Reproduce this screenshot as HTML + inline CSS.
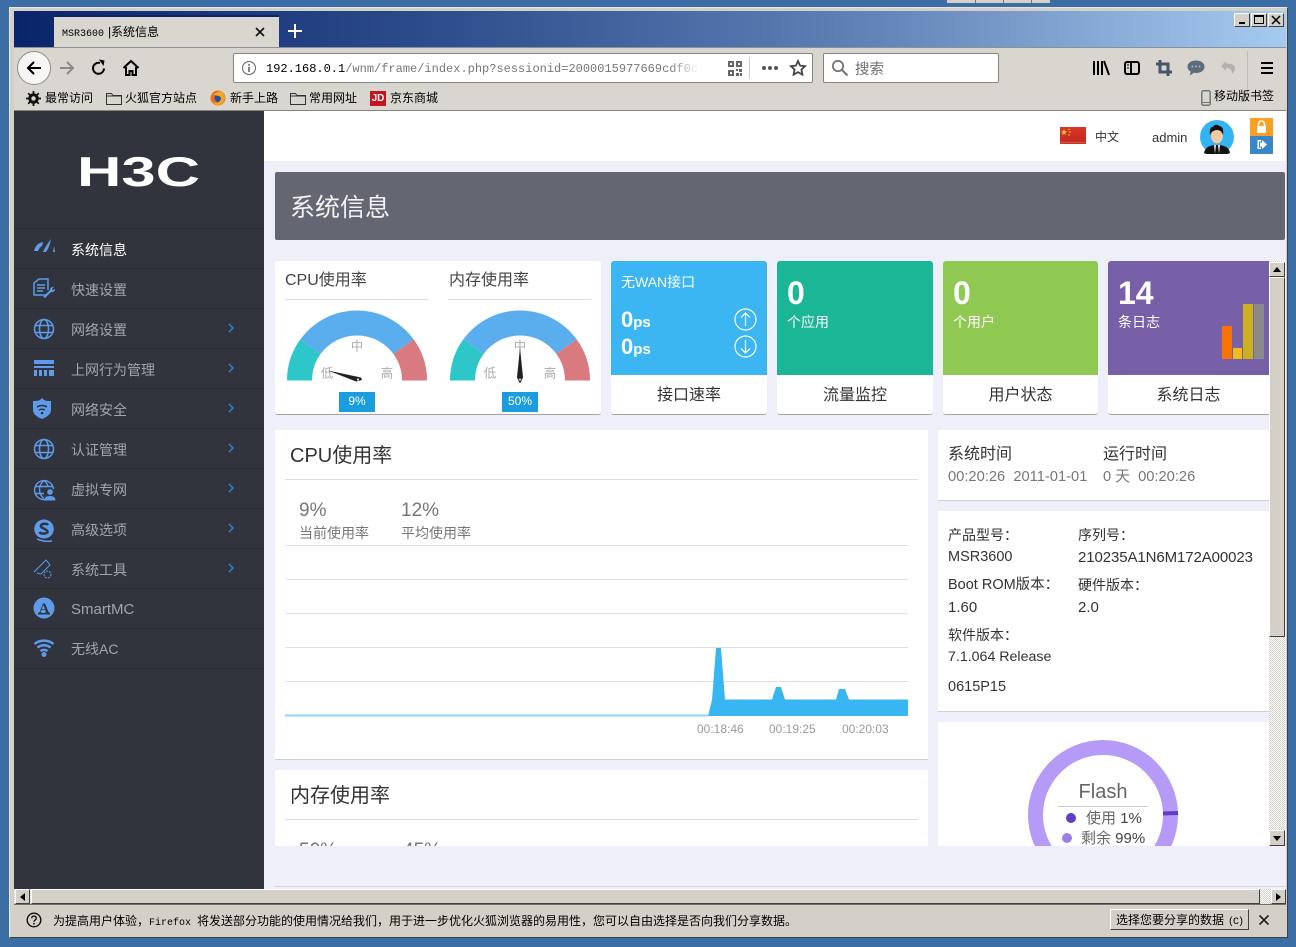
<!DOCTYPE html>
<html lang="zh"><head><meta charset="utf-8"><title>MSR3600|系统信息</title>
<style>
html,body{margin:0;padding:0;width:1296px;height:947px;overflow:hidden;background:#3a6ea5}
*{box-sizing:border-box}
body{font-family:"Liberation Sans","Noto Sans CJK SC",sans-serif;position:relative;color:#333}
.a,.t{position:absolute}
.t{white-space:nowrap;line-height:1}
.c{font-family:"Liberation Mono","WenQuanYi Zen Hei",monospace;color:#000}
.m{color:#a2a5aa;font-size:14px;left:71px}
.line{position:absolute;left:14px;width:250px;height:1px;background:#292b33}
.chev{position:absolute;left:228px;width:6px;height:10px}
.btn{position:absolute;background:#d4d0c8;border:1px solid;border-color:#fff #404040 #404040 #fff}
.dither{position:absolute;background:repeating-conic-gradient(#fff 0 25%,#d4d0c8 0 50%) 0 0/2px 2px}
.card{position:absolute;top:261px;height:154px;background:#fff;border-radius:3px;border-bottom:1px solid #a5a5a8;overflow:hidden}
.card .top{position:absolute;left:0;top:0;right:0;height:114px}
.card .f{position:absolute;left:0;right:0;top:125px;text-align:center;font-size:16px;line-height:20px;color:#333}
.cw{color:#fff}
.panel{position:absolute;background:#fff;border-bottom:1px solid #cfd0d6}
.gl{position:absolute;left:285px;width:623px;height:1px;background:#e0e0e0}
</style></head><body>

<div class="a" style="left:947px;top:0;width:103px;height:3px;background:#d4d0c8"></div>
<div class="a" style="left:975px;top:0;width:1px;height:3px;background:#777"></div>
<div class="a" style="left:1003px;top:0;width:1px;height:3px;background:#777"></div>
<div class="a" style="left:1031px;top:0;width:1px;height:3px;background:#777"></div>
<div class="a" style="left:9px;top:7px;width:1279px;height:931px;background:#d4d0c8;border:1px solid;border-color:#e8e6e0 #404040 #404040 #e8e6e0"></div>

<div class="a" style="left:14px;top:11px;width:1272px;height:36px;background:linear-gradient(90deg,#0a246a 0%,#2f4f8e 35%,#6284b8 68%,#a6caf0 100%)"></div>
<div class="a" style="left:54px;top:15px;width:225px;height:33px;background:#d9d6cf;border-top:2px solid #0a246a"></div>
<div class="t c" style="left:62px;top:27px;font-size:12px"><span style="font-size:10px">MSR3600</span><span style="margin-left:2px;display:inline-block;width:5px">|</span>系统信息</div>
<svg class="a" style="left:254px;top:26px" width="12" height="12"><path d="M2 2l8 8M10 2l-8 8" stroke="#111" stroke-width="1.6"/></svg>
<svg class="a" style="left:287px;top:23px" width="16" height="16"><path d="M8 1v14M1 8h14" stroke="#fff" stroke-width="2"/></svg>
<div class="btn" style="left:1234px;top:13px;width:16px;height:14px"><div class="a" style="left:4px;top:8px;width:6px;height:2px;background:#000"></div></div>
<div class="btn" style="left:1251px;top:13px;width:16px;height:14px"><div class="a" style="left:2px;top:1px;width:10px;height:9px;border:1px solid #000;border-top-width:2px"></div></div>
<div class="btn" style="left:1268px;top:13px;width:16px;height:14px"><svg class="a" style="left:2px;top:1px" width="10" height="10"><path d="M1 1l8 8M9 1l-8 8" stroke="#000" stroke-width="1.5"/></svg></div>

<div class="a" style="left:14px;top:47px;width:1272px;height:64px;background:#d9d6cf;border-top:1px solid #8a8f98;border-bottom:1px solid #85837e"></div>
<div class="a" style="left:17px;top:51px;width:34px;height:34px;border-radius:50%;background:#f7f6f4;border:1px solid #8f8d88"></div>
<svg class="a" style="left:25px;top:59px" width="18" height="18"><path d="M16 9H3M9 3L3 9l6 6" fill="none" stroke="#000" stroke-width="2"/></svg>
<svg class="a" style="left:58px;top:59px" width="18" height="18"><path d="M2 9h13M9 3l6 6-6 6" fill="none" stroke="#8b8985" stroke-width="2"/></svg>
<svg class="a" style="left:90px;top:59px" width="18" height="18"><path d="M14 9.500A5.500 5.500 0 1 1 10 4" fill="none" stroke="#000" stroke-width="2"/><path d="M9 0.500l5.500 1-1 5.500z" fill="#000"/></svg>
<svg class="a" style="left:122px;top:59px" width="18" height="18"><path d="M1.500 9L9 2l7.500 7M4 8v8h3.500v-4h3v4H14V8" fill="none" stroke="#000" stroke-width="2"/></svg>

<div class="a" style="left:233px;top:53px;width:580px;height:30px;background:#fff;border:1px solid #85837e;border-radius:2px"></div>
<svg class="a" style="left:241px;top:60px" width="16" height="16"><circle cx="8" cy="8" r="6.500" fill="none" stroke="#777" stroke-width="1.200"/><path d="M8 7v5M8 4v1.600" stroke="#555" stroke-width="1.500"/></svg>
<div class="t c" style="left:266px;top:62px;font-size:12px;width:432px;overflow:hidden;line-height:14px">192.168.0.1<span style="color:#777">/wnm/frame/index.php?sessionid=2000015977669cdf0c5c</span></div>
<div class="a" style="left:670px;top:56px;width:30px;height:24px;background:linear-gradient(90deg,rgba(255,255,255,0),#fff)"></div>
<svg class="a" style="left:728px;top:61px" width="14" height="15" fill="#666"><path d="M0 0h6v6H0zM2 2v2h2V2zM8 0h6v6H8zM10 2v2h2V2zM0 9h6v6H0zM2 11v2h2v-2zM8 8h2v2H8zM11 8h3v3h-3zM8 12h3v3H8zM12 12h2v3h-2z" fill-rule="evenodd"/></svg>
<div class="a" style="left:749px;top:57px;width:1px;height:22px;background:#cfccc6"></div>
<svg class="a" style="left:761px;top:65px" width="18" height="6" fill="#555"><circle cx="3" cy="3" r="2"/><circle cx="9" cy="3" r="2"/><circle cx="15" cy="3" r="2"/></svg>
<svg class="a" style="left:789px;top:59px" width="18" height="18"><path d="M9 2l2.100 4.600 5 .6-3.700 3.400 1 5L9 13.100 4.600 15.600l1-5L1.900 7.200l5-.6z" fill="none" stroke="#444" stroke-width="1.800"/></svg>

<div class="a" style="left:823px;top:53px;width:176px;height:30px;background:#fff;border:1px solid #85837e;border-radius:2px"></div>
<svg class="a" style="left:831px;top:59px" width="18" height="18"><circle cx="7" cy="7" r="5.200" fill="none" stroke="#777" stroke-width="1.800"/><path d="M11 11l5.500 5.500" stroke="#777" stroke-width="2.200"/></svg>
<div class="t c" style="left:855px;top:64px;font-size:14.500px;line-height:15px;color:#6f6f6f">搜索</div>

<svg class="a" style="left:1092px;top:60px" width="18" height="16"><path d="M2 1v14M6 1v14M10 1v14M12 1l5 14" stroke="#000" stroke-width="2" fill="none"/></svg>
<svg class="a" style="left:1124px;top:60px" width="16" height="16"><rect x="1" y="2" width="14" height="12" rx="2" fill="none" stroke="#000" stroke-width="2"/><path d="M7 2v12" stroke="#000" stroke-width="2"/><path d="M3 5h2M3 8h2" stroke="#000"/></svg>
<svg class="a" style="left:1156px;top:60px" width="16" height="16"><path d="M4 0v12h12M0 4h12v12" fill="none" stroke="#46566a" stroke-width="3"/></svg>
<svg class="a" style="left:1187px;top:60px" width="18" height="16"><path d="M9 0.500c5 0 8.500 2.700 8.500 6.200S14 13 9 13c-.8 0-1.500-.1-2.200-.2L3 15.500l.6-4C1.600 10.400.5 8.700.5 6.700.5 3.200 4 .5 9 .5z" fill="#5d6b7d"/><circle cx="5.500" cy="6.500" r="1" fill="#a9b1bb"/><circle cx="9" cy="6.500" r="1" fill="#a9b1bb"/><circle cx="12.500" cy="6.500" r="1" fill="#a9b1bb"/></svg>
<svg class="a" style="left:1220px;top:60px" width="16" height="16"><path d="M6 1L1 6l5 5V8c4 0 6 1.500 6 6 2-2 3-3.500 3-6 0-3-3-4.500-9-4.500z" fill="#b4b3af"/></svg>
<div class="a" style="left:1247px;top:51px;width:1px;height:42px;background:#bfbcb5"></div>
<svg class="a" style="left:1260px;top:61px" width="14" height="14"><path d="M1 2h12M1 7h12M1 12h12" stroke="#000" stroke-width="2"/></svg>

<svg class="a" style="left:26px;top:91px" width="15" height="15"><circle cx="7.500" cy="7.500" r="4" fill="none" stroke="#111" stroke-width="2.500"/><path d="M7.500 0v15M0 7.500h15M2.200 2.200l10.600 10.600M12.800 2.200L2.200 12.800" stroke="#111" stroke-width="1.800"/><circle cx="7.500" cy="7.500" r="2.200" fill="#d9d6cf"/></svg>
<div class="t c" style="left:45px;top:93px;font-size:12px">最常访问</div>
<svg class="a" style="left:106px;top:91px" width="16" height="14"><path d="M.5 2.500h5l1.500 2h8.500v9H.5z" fill="#d9d6cf" stroke="#333"/><path d="M1 5h14" stroke="#333"/></svg>
<div class="t c" style="left:125px;top:93px;font-size:12px">火狐官方站点</div>
<svg class="a" style="left:210px;top:90px" width="16" height="16"><circle cx="8" cy="8" r="7.500" fill="#e8701a"/><circle cx="9" cy="8" r="4.500" fill="#2b4f9c"/><path d="M2 4c3 1 6-3 8-3 3 1 5 4 5 7-1 5-4 7-7 7-2 0-4-1-5-3 3 2 8 0 8-4-1-3-6-2-9-4z" fill="#f5a623"/></svg>
<div class="t c" style="left:230px;top:93px;font-size:12px">新手上路</div>
<svg class="a" style="left:290px;top:91px" width="16" height="14"><path d="M.5 2.500h5l1.500 2h8.500v9H.5z" fill="#d9d6cf" stroke="#333"/><path d="M1 5h14" stroke="#333"/></svg>
<div class="t c" style="left:309px;top:93px;font-size:12px">常用网址</div>
<div class="t" style="left:370px;top:91px;width:16px;height:15px;background:#c4161c;color:#fff;font-size:10px;line-height:15px;text-align:center;font-weight:bold">JD</div>
<div class="t c" style="left:390px;top:93px;font-size:12px">京东商城</div>
<svg class="a" style="left:1201px;top:90px" width="10" height="16"><rect x=".8" y=".8" width="8.400" height="14.400" rx="1.500" fill="#d9d6cf" stroke="#6f7680" stroke-width="1.500"/><path d="M1 12.500h8" stroke="#6f7680"/></svg>
<div class="t c" style="left:1214px;top:91px;font-size:12px">移动版书签</div>

<!-- page -->
<div class="a" style="left:14px;top:111px;width:1272px;height:778px;background:#eeeff8"></div>
<div class="a" style="left:14px;top:111px;width:250px;height:778px;background:#31343d"></div>
<div class="a" style="left:275px;top:886px;width:1010px;height:1px;background:#d8d8dc"></div>
<div class="a" style="left:264px;top:111px;width:1022px;height:50px;background:#fff"></div>

<svg class="a" style="left:76px;top:150px" width="126" height="40"><text x="1" y="36" font-family="Liberation Sans" font-weight="bold" font-size="42" fill="#fff" textLength="123" lengthAdjust="spacingAndGlyphs">H3C</text></svg>

<div class="line" style="top:228px"></div><div class="line" style="top:268px"></div><div class="line" style="top:308px"></div><div class="line" style="top:348px"></div><div class="line" style="top:388px"></div><div class="line" style="top:428px"></div><div class="line" style="top:468px"></div><div class="line" style="top:508px"></div><div class="line" style="top:548px"></div><div class="line" style="top:588px"></div><div class="line" style="top:628px"></div><div class="line" style="top:668px"></div>

<div class="t m" style="top:243px;color:#fff">系统信息</div>
<div class="t m" style="top:283px">快速设置</div>
<div class="t m" style="top:323px">网络设置</div>
<div class="t m" style="top:363px">上网行为管理</div>
<div class="t m" style="top:403px">网络安全</div>
<div class="t m" style="top:443px">认证管理</div>
<div class="t m" style="top:483px">虚拟专网</div>
<div class="t m" style="top:523px">高级选项</div>
<div class="t m" style="top:563px">系统工具</div>
<div class="t m" style="top:602px;font-size:15px">SmartMC</div>
<div class="t m" style="top:642px">无线AC</div>

<svg class="chev" style="top:323px"><path d="M1 1l4 4-4 4" fill="none" stroke="#2a82dc" stroke-width="1.500"/></svg>
<svg class="chev" style="top:363px"><path d="M1 1l4 4-4 4" fill="none" stroke="#2a82dc" stroke-width="1.500"/></svg>
<svg class="chev" style="top:403px"><path d="M1 1l4 4-4 4" fill="none" stroke="#2a82dc" stroke-width="1.500"/></svg>
<svg class="chev" style="top:443px"><path d="M1 1l4 4-4 4" fill="none" stroke="#2a82dc" stroke-width="1.500"/></svg>
<svg class="chev" style="top:483px"><path d="M1 1l4 4-4 4" fill="none" stroke="#2a82dc" stroke-width="1.500"/></svg>
<svg class="chev" style="top:523px"><path d="M1 1l4 4-4 4" fill="none" stroke="#2a82dc" stroke-width="1.500"/></svg>
<svg class="chev" style="top:563px"><path d="M1 1l4 4-4 4" fill="none" stroke="#2a82dc" stroke-width="1.500"/></svg>

<svg class="a" style="left:33px;top:238px" width="24" height="16" fill="#5e9bea"><path d="M1 13C2 8 5 5 10 4l-1 4c-2 1-3 3-4 5z"/><path d="M10 14c2-5 5-9 8-13-1 5-2 9-5 13z"/><path d="M21 8l1 6h-2z"/></svg>
<svg class="a" style="left:33px;top:278px" width="22" height="21" fill="none" stroke="#5e9bea" stroke-width="1.500"><path d="M6 1h9v11M6 1L1 5v12h12"/><path d="M4 7h8M4 10h8M4 13h6"/><path d="M10 19l7-7c0-2 2-3.500 4-3l-2 2 1 1 2-1c0 2-2 3.500-4 3l-6 6z" fill="#5e9bea" stroke="none"/></svg>
<svg class="a" style="left:33px;top:318px" width="22" height="22" fill="none" stroke="#5e9bea" stroke-width="1.500"><circle cx="11" cy="11" r="9.500"/><ellipse cx="11" cy="11" rx="4.500" ry="9.500"/><path d="M2 7.500h18M2 14.500h18"/></svg>
<svg class="a" style="left:33px;top:360px" width="22" height="17" fill="#5e9bea"><rect x="1" y="0" width="20" height="4"/><rect x="1" y="6" width="20" height="2"/><rect x="1" y="10" width="3" height="6"/><rect x="6" y="10" width="3" height="6"/><rect x="11" y="10" width="3" height="6"/><rect x="16" y="10" width="5" height="6"/></svg>
<svg class="a" style="left:33px;top:398px" width="18" height="21"><path d="M9 0l2 2c2 1 4 1 7 1v9c0 4-4 7-9 9-5-2-9-5-9-9V3c3 0 5 0 7-1z" fill="#5e9bea"/><path d="M4 9c3-2 7-2 10 0M6 12c2-1 4-1 6 0" fill="none" stroke="#31343d" stroke-width="1.500"/><circle cx="9" cy="15" r="1.300" fill="#31343d"/></svg>
<svg class="a" style="left:33px;top:438px" width="22" height="22" fill="none" stroke="#5e9bea" stroke-width="1.500"><circle cx="11" cy="11" r="9.500"/><ellipse cx="11" cy="11" rx="4.500" ry="9.500"/><path d="M2 7.500h18M2 14.500h18"/></svg>
<svg class="a" style="left:33px;top:479px" width="23" height="22" fill="none" stroke="#5e9bea" stroke-width="1.400"><path d="M13 20.400A9.500 9.500 0 1 1 20.500 10"/><path d="M11 1.500c-2.500 2-4.500 5-4.500 9s2 7 4.500 9M11 1.500c2 1.500 3.500 3.500 4 6M2 7.500h18M2 14.500h9"/><circle cx="17" cy="13" r="2.800" fill="#5e9bea" stroke="none"/><path d="M11.500 21.500c0-3 2-4.500 5.500-4.500s5.500 1.500 5.500 4.500z" fill="#5e9bea" stroke="none"/></svg>
<svg class="a" style="left:33px;top:519px" width="22" height="23"><ellipse cx="11" cy="10" rx="9.800" ry="9.500" fill="#5e9bea"/><path d="M15 6c-1-1.500-6-2-7 .5S14 10 14.500 12.500 8 15.500 6.500 13" fill="none" stroke="#31343d" stroke-width="2.500"/><path d="M4 20c4 2 11 3 15 2" stroke="#5e9bea" stroke-width="1.500" fill="none"/></svg>
<svg class="a" style="left:33px;top:558px" width="20" height="21" fill="none" stroke="#5e9bea" stroke-width="1"><path d="M1 14L13 2l4 5-9 9-4-1"/><circle cx="14.500" cy="16.500" r="3.500" stroke-dasharray="2 1"/></svg>
<svg class="a" style="left:33px;top:597px" width="22" height="22"><circle cx="11" cy="11" r="10.500" fill="#5e9bea"/><text x="11" y="16" text-anchor="middle" font-family="Liberation Serif" font-weight="bold" font-size="15" fill="#31343d">A</text><rect x="5" y="16" width="12" height="1.500" fill="#31343d"/></svg>
<svg class="a" style="left:33px;top:638px" width="22" height="20" fill="none" stroke="#5e9bea" stroke-width="2.400"><path d="M1.500 6C7 1.500 15 1.500 20.500 6M4.500 9.500c4-3 9-3 13 0M7.500 13c2-1.500 5-1.500 7 0"/><circle cx="11" cy="16.500" r="2.500" fill="#5e9bea" stroke="none"/></svg>

<!-- header -->
<div class="a" style="left:1060px;top:127px;width:26px;height:17px;background:linear-gradient(#d7382a,#c62a1c 85%,#e0594a 90%,#b5261a)"></div>
<svg class="a" style="left:1061px;top:128px" width="10" height="10" fill="#f4d03f"><path d="M3 1l.9 2.300 2.100.1-1.700 1.400.6 2.200L3 5.800 1.100 7l.6-2.200L0 3.400l2.100-.1z"/><circle cx="8" cy="1.500" r=".7"/><circle cx="9" cy="4" r=".7"/><circle cx="8" cy="7" r=".7"/></svg>
<div class="t" style="left:1095px;top:131px;font-size:12px;color:#333">中文</div>
<div class="t" style="left:1152px;top:131px;font-size:13px;color:#333">admin</div>
<svg class="a" style="left:1200px;top:120px" width="34" height="34"><circle cx="17" cy="17" r="17" fill="#33b5f5"/><path d="M4 33c1-6 6-8 13-8s12 2 13 8c-4 2-8 2-13 2s-9 0-13-2z" fill="#111"/><path d="M14 25h6l-1 9h-4z" fill="#eee"/><path d="M16 25h2l1 9h-4z" fill="#111"/><ellipse cx="17" cy="16" rx="6" ry="7.500" fill="#f2c9a0"/><path d="M10 15c-1-5 1-9 3-8 1-3 5-3 6-1 3 0 5 3 4 9-1-3-3-5-6-5s-6 2-7 5z" fill="#111"/></svg>
<div class="a" style="left:1250px;top:118px;width:23px;height:18px;background:#fa9f23"></div>
<svg class="a" style="left:1256px;top:120px" width="11" height="14"><path d="M2.500 6V4a3 3 0 0 1 6 0v2" fill="none" stroke="#fff" stroke-width="1.500"/><rect x="1" y="6" width="9" height="7" rx="1" fill="#fff"/></svg>
<div class="a" style="left:1250px;top:136px;width:23px;height:18px;background:#3a87c8"></div>
<svg class="a" style="left:1256px;top:139px" width="12" height="11" fill="#fff"><path d="M5 1H1.500v9H5V8.500H3v-6h2z"/><path d="M6 3.500V1l5 4.500L6 10V7.500H4v-4z"/></svg>

<!-- banner -->
<div class="a" style="left:275px;top:172px;width:1010px;height:68px;background:#646672;border-radius:2px"></div>
<div class="t" style="left:290px;top:196px;font-size:25px;color:#f2f2f4">系统信息</div>

<!-- scroll content clip -->
<div class="a" style="left:264px;top:240px;width:1005px;height:606px;overflow:hidden">
<div class="a" style="left:-264px;top:-240px;width:1296px;height:947px">

<div class="card" style="left:275px;width:326px"></div>
<div class="t" style="left:285px;top:273px;font-size:16px;color:#444">CPU使用率</div>
<div class="a" style="left:285px;top:299px;width:143px;height:1px;background:#ddd"></div>
<div class="t" style="left:449px;top:273px;font-size:16px;color:#444">内存使用率</div>
<div class="a" style="left:448px;top:299px;width:143px;height:1px;background:#ddd"></div>

<svg class="a" style="left:280px;top:305px" width="320" height="85">
 <g transform="translate(77,75.500)">
  <path d="M-70 0A70 70 0 0 1 -56.600 -41.200L-36.400 -26.500A45 45 0 0 0 -45 0z" fill="#2ec7c9"/>
  <path d="M-56.600 -41.200A70 70 0 0 1 56.600 -41.200L36.400 -26.500A45 45 0 0 0 -36.400 -26.500z" fill="#5aaeee"/>
  <path d="M56.600 -41.200A70 70 0 0 1 70 0H45A45 45 0 0 0 36.400 -26.500z" fill="#d87a80"/>
  <text x="0" y="-30" text-anchor="middle" font-size="12.500" fill="#aaa">中</text>
  <text x="-30" y="-3" text-anchor="middle" font-size="12.500" fill="#aaa">低</text>
  <text x="30" y="-3" text-anchor="middle" font-size="12.500" fill="#aaa">高</text>
  <path d="M-29 -10L4 -3 5 -0.500 -1 1z" fill="#222"/><circle cx="1" cy="-1" r="1" fill="#fff"/>
 </g>
 <g transform="translate(240,75.500)">
  <path d="M-70 0A70 70 0 0 1 -56.600 -41.200L-36.400 -26.500A45 45 0 0 0 -45 0z" fill="#2ec7c9"/>
  <path d="M-56.600 -41.200A70 70 0 0 1 56.600 -41.200L36.400 -26.500A45 45 0 0 0 -36.400 -26.500z" fill="#5aaeee"/>
  <path d="M56.600 -41.200A70 70 0 0 1 70 0H45A45 45 0 0 0 36.400 -26.500z" fill="#d87a80"/>
  <text x="0" y="-30" text-anchor="middle" font-size="12.500" fill="#aaa">中</text>
  <text x="-30" y="-3" text-anchor="middle" font-size="12.500" fill="#aaa">低</text>
  <text x="30" y="-3" text-anchor="middle" font-size="12.500" fill="#aaa">高</text>
  <path d="M0 -33L3 -3 0 3 -3 -3z" fill="#222"/><circle cx="0" cy="-1" r="1" fill="#fff"/>
 </g>
</svg>
<div class="t" style="left:339px;top:392px;width:36px;height:20px;line-height:19px;background:#1a9ddf;color:#fff;font-size:12px;text-align:center">9%</div>
<div class="t" style="left:502px;top:392px;width:36px;height:20px;line-height:19px;background:#1a9ddf;color:#fff;font-size:12px;text-align:center">50%</div>

<div class="card" style="left:611px;width:156px"><div class="top" style="background:#3bb6f2"></div><div class="f">接口速率</div></div>
<div class="t cw" style="left:621px;top:275px;font-size:14px">无WAN接口</div>
<div class="t cw" style="left:621px;top:309px;font-size:22px;font-weight:bold">0<span style="font-size:15px">ps</span></div>
<div class="t cw" style="left:621px;top:336px;font-size:22px;font-weight:bold">0<span style="font-size:15px">ps</span></div>
<svg class="a" style="left:733px;top:307px" width="24" height="52" fill="none" stroke="#fff" stroke-width="1.200"><circle cx="12.500" cy="12.500" r="10.500"/><path d="M12.500 19V6M8 10.500l4.500-4.500 4.500 4.500"/><circle cx="12.500" cy="39.500" r="10.500"/><path d="M12.500 33v13M8 41.500l4.500 4.500 4.500-4.500"/></svg>

<div class="card" style="left:777px;width:156px"><div class="top" style="background:#1ab696"></div><div class="f">流量监控</div></div>
<div class="t cw" style="left:787px;top:277px;font-size:32px;font-weight:bold">0</div>
<div class="t cw" style="left:787px;top:315px;font-size:14px">个应用</div>

<div class="card" style="left:943px;width:155px"><div class="top" style="background:#8fc952"></div><div class="f">用户状态</div></div>
<div class="t cw" style="left:953px;top:277px;font-size:32px;font-weight:bold">0</div>
<div class="t cw" style="left:953px;top:315px;font-size:14px">个用户</div>

<div class="card" style="left:1108px;width:170px"><div class="top" style="background:#7860a8"></div><div class="f" style="right:9px;left:0">系统日志</div></div>
<div class="t cw" style="left:1118px;top:277px;font-size:32px;font-weight:bold">14</div>
<div class="t cw" style="left:1118px;top:315px;font-size:14px">条日志</div>
<div class="a" style="left:1222px;top:326px;width:10px;height:33px;background:#f97300"></div>
<div class="a" style="left:1233px;top:348px;width:9px;height:11px;background:#f2bb1c"></div>
<div class="a" style="left:1243px;top:304px;width:10px;height:55px;background:#cdb020"></div>
<div class="a" style="left:1254px;top:304px;width:10px;height:55px;background:#8a8a8a"></div>

<!-- CPU chart -->
<div class="panel" style="left:275px;top:430px;width:653px;height:330px"></div>
<div class="t" style="left:290px;top:446px;font-size:20px;color:#333">CPU使用率</div>
<div class="a" style="left:285px;top:479px;width:633px;height:1px;background:#ddd"></div>
<div class="t" style="left:299px;top:501px;font-size:19px;color:#777">9%</div>
<div class="t" style="left:401px;top:501px;font-size:19px;color:#777">12%</div>
<div class="t" style="left:299px;top:526px;font-size:14px;color:#777">当前使用率</div>
<div class="t" style="left:401px;top:526px;font-size:14px;color:#777">平均使用率</div>
<div class="gl" style="top:545px"></div><div class="gl" style="top:579px"></div><div class="gl" style="top:613px"></div><div class="gl" style="top:647px"></div><div class="gl" style="top:681px"></div>
<svg class="a" style="left:285px;top:640px" width="623" height="80"><path d="M0 75.500H423" stroke="#8fd5f5" stroke-width="2"/><path d="M423 76L427 60 431 8H436L440 59.500H487L491 47H496L500 59.500H551L554 49H560L564 59.500H623V76z" fill="#38b6f1"/></svg>
<div class="t" style="left:697px;top:723px;font-size:12px;color:#999">00:18:46</div>
<div class="t" style="left:769px;top:723px;font-size:12px;color:#999">00:19:25</div>
<div class="t" style="left:842px;top:723px;font-size:12px;color:#999">00:20:03</div>

<!-- Memory -->
<div class="panel" style="left:275px;top:770px;width:653px;height:200px"></div>
<div class="t" style="left:290px;top:786px;font-size:20px;color:#333">内存使用率</div>
<div class="a" style="left:285px;top:819px;width:633px;height:1px;background:#ddd"></div>
<div class="t" style="left:299px;top:841px;font-size:19px;color:#777">50%</div>
<div class="t" style="left:403px;top:841px;font-size:19px;color:#777">45%</div>

<!-- Right -->
<div class="panel" style="left:938px;top:430px;width:340px;height:71px"></div>
<div class="t" style="left:948px;top:447px;font-size:16px;color:#333">系统时间</div>
<div class="t" style="left:1103px;top:447px;font-size:16px;color:#333">运行时间</div>
<div class="t" style="left:948px;top:470px;font-size:14.700px;color:#777">00:20:26&nbsp; 2011-01-01</div>
<div class="t" style="left:1103px;top:470px;font-size:14.700px;color:#777">0 天 &nbsp;00:20:26</div>

<div class="panel" style="left:938px;top:511px;width:340px;height:201px"></div>
<div class="t" style="left:948px;top:528px;font-size:14px;color:#333">产品型号：</div>
<div class="t" style="left:1078px;top:528px;font-size:14px;color:#333">序列号：</div>
<div class="t" style="left:948px;top:550px;font-size:14.500px;color:#333">MSR3600</div>
<div class="t" style="left:1078px;top:550px;font-size:15px;color:#333;letter-spacing:-.1px">210235A1N6M172A00023</div>
<div class="t" style="left:948px;top:578px;font-size:14.500px;color:#333">Boot ROM版本：</div>
<div class="t" style="left:1078px;top:578px;font-size:14px;color:#333">硬件版本：</div>
<div class="t" style="left:948px;top:600px;font-size:15px;color:#333">1.60</div>
<div class="t" style="left:1078px;top:600px;font-size:15px;color:#333">2.0</div>
<div class="t" style="left:948px;top:628px;font-size:14px;color:#333">软件版本：</div>
<div class="t" style="left:948px;top:650px;font-size:14.200px;color:#333">7.1.064 Release</div>
<div class="t" style="left:948px;top:680px;font-size:14.500px;color:#333">0615P15</div>

<div class="panel" style="left:938px;top:722px;width:340px;height:200px"></div>
<svg class="a" style="left:1020px;top:732px" width="170" height="170"><circle cx="83" cy="83" r="67.500" fill="none" stroke="#b59bf7" stroke-width="15"/><path d="M143 81.500L158 81" stroke="#5f3dc4" stroke-width="4"/></svg>
<div class="t" style="left:1058px;top:782px;width:90px;text-align:center;font-size:20px;color:#666">Flash</div>
<div class="a" style="left:1058px;top:806px;width:90px;height:1px;background:#ccc"></div>
<div class="a" style="left:1066px;top:813px;width:10px;height:10px;border-radius:50%;background:#5f3dc4"></div>
<div class="t" style="left:1086px;top:811px;font-size:15px;color:#666">使用 <span style="color:#444">1%</span></div>
<div class="a" style="left:1062px;top:833px;width:10px;height:10px;border-radius:50%;background:#9b7fe0"></div>
<div class="t" style="left:1081px;top:831px;font-size:15px;color:#666">剩余 <span style="color:#444">99%</span></div>
</div></div>

<!-- v scrollbar -->
<div class="dither" style="left:1269px;top:261px;width:16px;height:585px"></div>
<div class="btn" style="left:1269px;top:262px;width:16px;height:15px"><svg class="a" style="left:2px;top:3px" width="10" height="7"><path d="M5 1L9 6H1z" fill="#000"/></svg></div>
<div class="btn" style="left:1269px;top:277px;width:16px;height:360px"></div>
<div class="btn" style="left:1269px;top:830px;width:16px;height:16px"><svg class="a" style="left:2px;top:4px" width="10" height="7"><path d="M1 1H9L5 6z" fill="#000"/></svg></div>

<!-- h scrollbar -->
<div class="dither" style="left:14px;top:889px;width:1272px;height:15px"></div>
<div class="btn" style="left:15px;top:889px;width:15px;height:15px"><svg class="a" style="left:3px;top:2px" width="7" height="10"><path d="M1 5L6 1V9z" fill="#000"/></svg></div>
<div class="btn" style="left:31px;top:889px;width:1229px;height:15px"></div>
<div class="btn" style="left:1271px;top:889px;width:15px;height:15px"><svg class="a" style="left:3px;top:2px" width="7" height="10"><path d="M6 5L1 1V9z" fill="#000"/></svg></div>

<!-- notification -->
<div class="a" style="left:14px;top:904px;width:1272px;height:32px;background:#d4d0c8;border-top:1px solid #707070"></div>
<svg class="a" style="left:26px;top:912px" width="16" height="16"><circle cx="8" cy="8" r="6.800" fill="none" stroke="#111" stroke-width="1.400"/><path d="M5.700 6.300c0-3 4.600-3 4.600 0 0 1.800-2.300 1.800-2.300 3.400" fill="none" stroke="#111" stroke-width="1.400"/><circle cx="8" cy="11.800" r=".9" fill="#111"/></svg>
<div class="t c" style="left:53px;top:916px;font-size:12px">为提高用户体验，<span style="font-size:10px">Firefox </span>将发送部分功能的使用情况给我们，用于进一步优化火狐浏览器的易用性，您可以自由选择是否向我们分享数据。</div>
<div class="btn" style="left:1110px;top:909px;width:139px;height:21px"></div>
<div class="t c" style="left:1116px;top:915px;font-size:12px">选择您要分享的数据<span style="font-size:10px;letter-spacing:-1px;margin-left:4px">(C)</span></div>
<svg class="a" style="left:1258px;top:914px" width="12" height="12"><path d="M1.500 1.500l9 9M10.500 1.500l-9 9" stroke="#222" stroke-width="1.600"/></svg>

</body></html>
